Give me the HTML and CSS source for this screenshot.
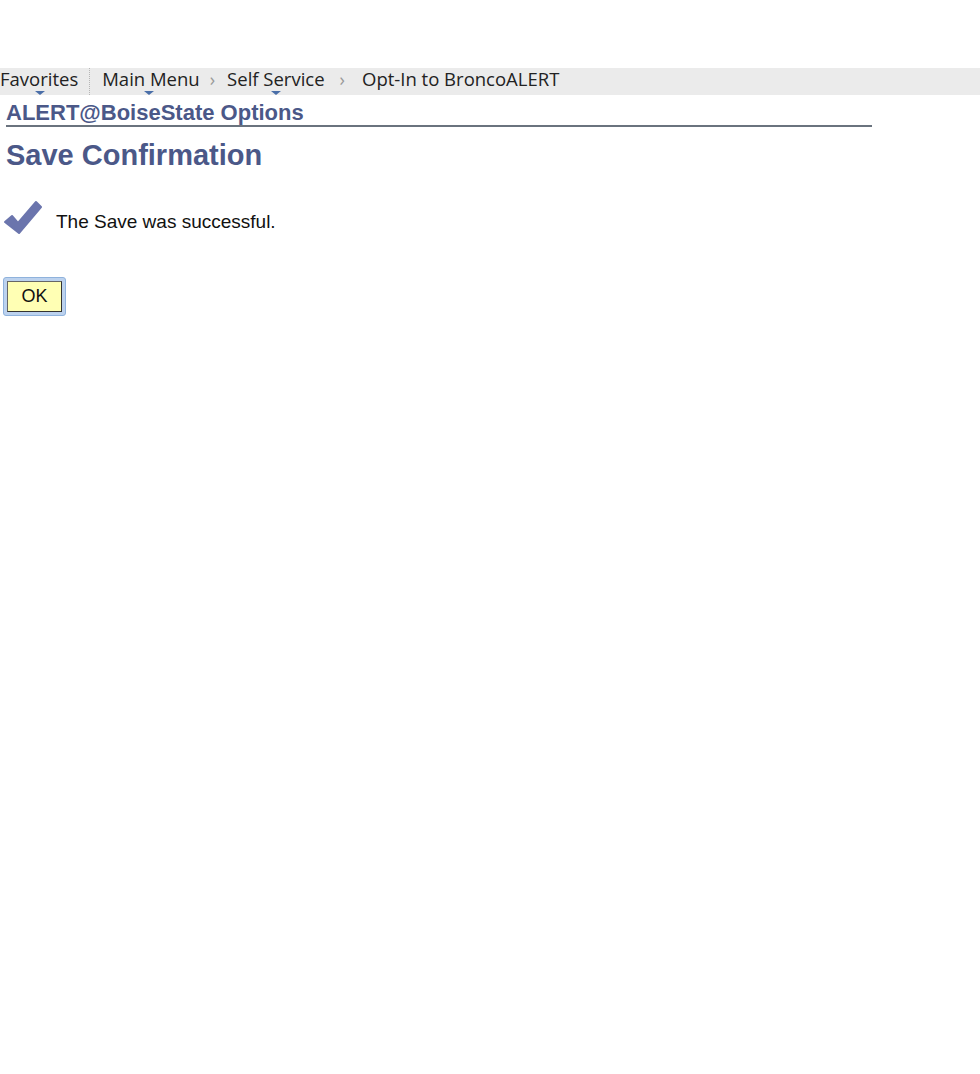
FILE: index.html
```html
<!DOCTYPE html>
<html>
<head>
<meta charset="utf-8">
<link rel="stylesheet" href="styles.css">
</head>
<body>
<div class="top"></div>
<nav class="crumbs">
  <span class="item drop fav">Favorites</span>
  <span class="sep"></span>
  <span class="item drop mm">Main Menu</span>
  <span class="chev">›</span>
  <span class="item drop ss">Self Service</span>
  <span class="chev">›</span>
  <span class="item">Opt-In to BroncoALERT</span>
</nav>
<main class="content">
  <h2 class="subtitle">ALERT@BoiseState Options</h2>
  <h1 class="title">Save Confirmation</h1>
  <div class="msg">
    <svg class="check" width="38" height="36" viewBox="0 0 38 36">
      <path d="M1 23 L8 17 L14 24 L32 3 L37 8 L15 34 Z" fill="#6b75ad" stroke="#6b75ad" stroke-width="2" stroke-linejoin="round"/>
    </svg>
    <span class="msgtext">The Save was successful.</span>
  </div>
  <div class="btnwrap"><button class="ok">OK</button></div>
</main>
</body>
</html>
```
FILE: styles.css
```css
html, body { margin: 0; padding: 0; background: #fff; }
body { width: 980px; height: 1074px; overflow: hidden; }
.top { height: 68px; }
.crumbs {
  height: 27px;
  background: #ebebeb;
  display: flex;
  align-items: flex-start;
  font-family: "Open Sans", "DejaVu Sans", sans-serif;
  font-size: 18.5px;
  color: #222;
}
.item { position: relative; line-height: 20px; margin-top: 1px; }
.drop::after {
  content: "";
  position: absolute;
  bottom: -6px;
  border-left: 5px solid transparent;
  border-right: 5px solid transparent;
  border-top: 4px solid #4a6ea8;
}
.fav::after { left: 35px; }
.mm::after { left: 42px; }
.ss::after { left: 44px; }
.sep {
  width: 0;
  height: 27px;
  border-left: 1px dotted #b5b5b5;
  margin: 0 12px 0 11px;
}
.chev { color: #999; font-size: 18px; margin: 0 12px 0 10px; line-height: 20px; margin-top: 1px; }
.chev + .item + .chev { margin: 1px 17px 0 15px; }
.content { padding-left: 6px; }
.subtitle {
  margin: 6px 0 0 0;
  width: 866px;
  font-family: "Liberation Sans", Arial, sans-serif;
  font-weight: bold;
  font-size: 22px;
  line-height: 24px;
  color: #4b5888;
  border-bottom: 2px solid #6a737e;
  padding-bottom: 0;
}
.title {
  margin: 12px 0 0 0;
  font-family: "Liberation Sans", Arial, sans-serif;
  font-weight: bold;
  font-size: 29px;
  line-height: 32px;
  color: #4b5888;
}
.msg { display: flex; align-items: center; margin-top: 28px; margin-left: -2px; }
.check { display: block; }
.msgtext {
  font-family: "Liberation Sans", Arial, sans-serif;
  font-size: 19px;
  color: #111;
  margin-left: 14px;
  margin-top: 10px;
}
.btnwrap {
  display: inline-block;
  margin-top: 42px;
  margin-left: -3px;
  padding: 3px;
  border: 1px solid #8fb2dc;
  border-radius: 3px;
  background: #bcd2ee;
}
.ok {
  display: block;
  font-family: "Liberation Sans", Arial, sans-serif;
  font-size: 18px;
  width: 55px;
  height: 31px;
  background: #ffffb4;
  border: 1px solid #666;
  border-right-color: #333;
  border-bottom-color: #333;
  color: #111;
  padding: 0;
}
```
